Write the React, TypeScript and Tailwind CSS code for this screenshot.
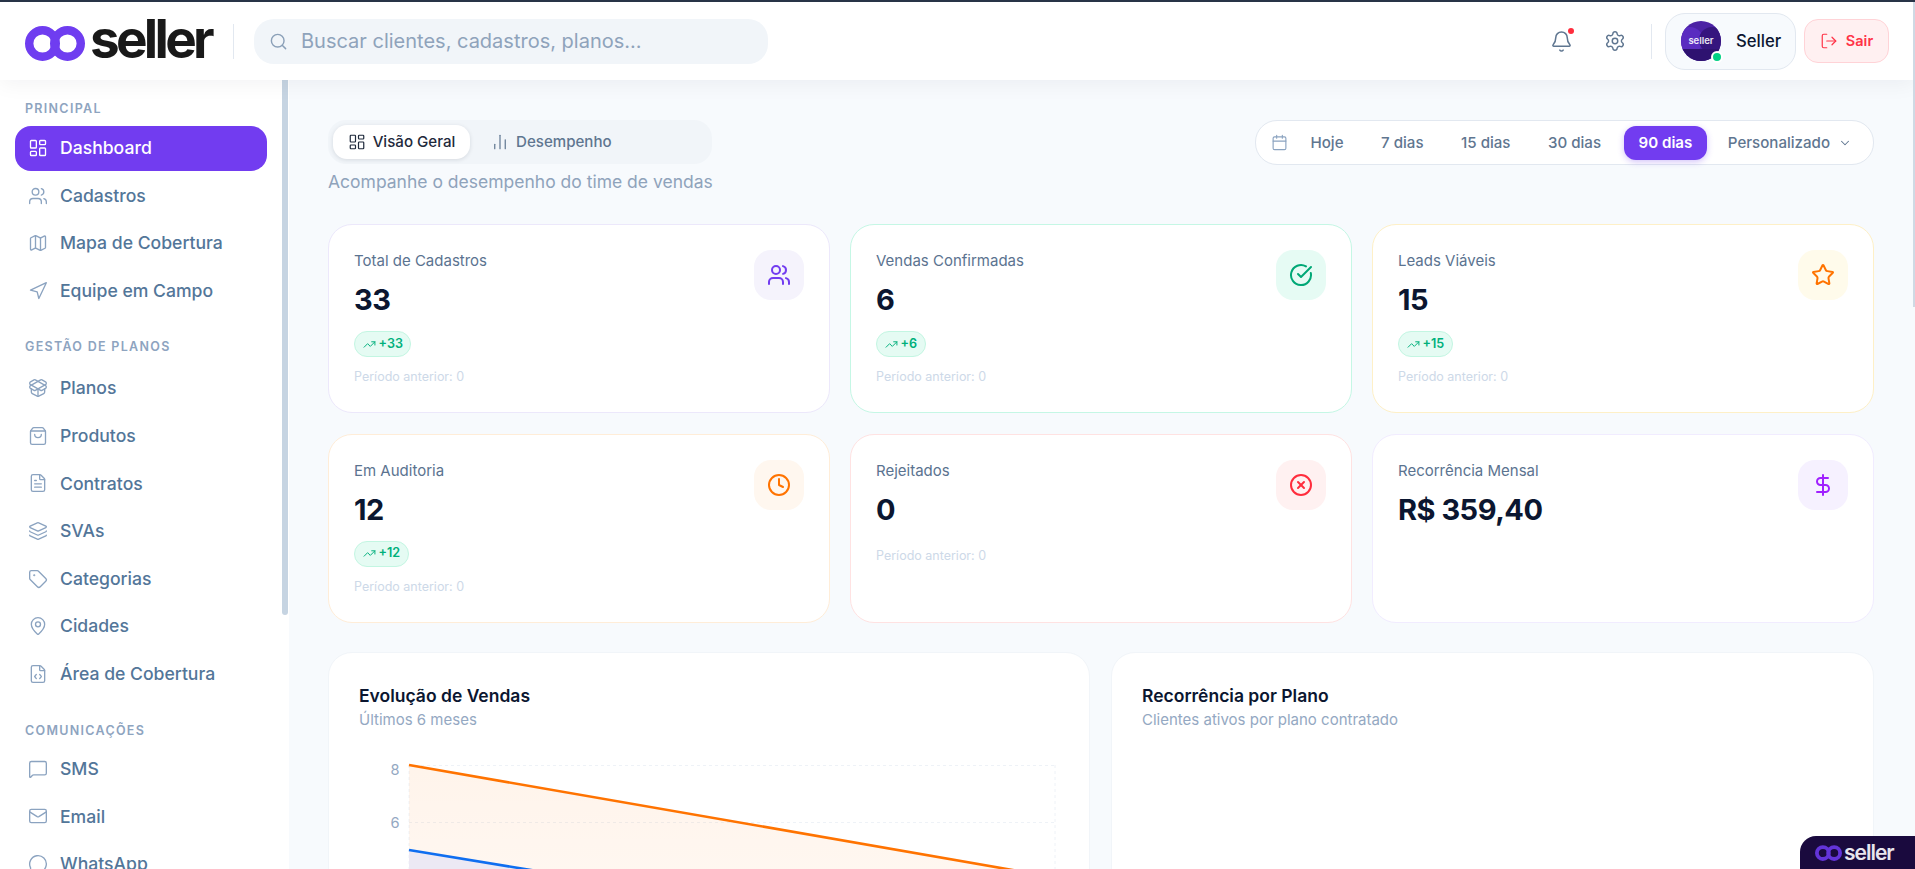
import React from "react";
import {
  Bell, Settings, Search, LayoutDashboard, Users, Map, Navigation, PackageOpen, ShoppingBag,
  FileText, Layers, Tag, MapPin, FileCode, MessageSquare, Mail, MessageCircle, ChartNoAxesColumn,
  Calendar, ChevronDown, LogOut, TrendingUp, CircleCheckBig, CircleX, Clock, Star, DollarSign,
} from "lucide-react";

function Rings({ w, h, stroke = "#6f3df0" }: { w: number; h: number; stroke?: string }) {
  return (
    <svg width={w} height={h} viewBox="0 0 60 35" fill="none" className="shrink-0">
      <circle cx="17.5" cy="17.5" r="13.3" stroke={stroke} strokeWidth="8.4" />
      <circle cx="42.5" cy="17.5" r="13.3" stroke={stroke} strokeWidth="8.4" />
    </svg>
  );
}

function NavItem({ icon: Icon, label, active }: { icon: any; label: string; active?: boolean }) {
  return (
    <div
      className={
        active
          ? "flex h-[45px] items-center gap-[12px] rounded-[16px] bg-[#723cf0] px-[13px] text-white"
          : "flex h-[45px] items-center gap-[12px] rounded-[16px] px-[13px] text-[#537699]"
      }
    >
      <Icon size={20} strokeWidth={1.6} className={active ? "text-white" : "text-[#8ba3c0]"} />
      <span className="text-[17.6px] font-medium leading-none">{label}</span>
    </div>
  );
}

function Section({ title, children, labelGap, top = "" }: { title: string; children: React.ReactNode; labelGap: string; top?: string }) {
  return (
    <div className={`flex flex-col ${top}`}>
      <div className={`pl-[10px] text-[12.5px] font-semibold uppercase leading-[14px] tracking-[1.3px] text-[#8ea4bf] ${labelGap}`}>{title}</div>
      <div className="flex flex-col gap-[2.6px]">{children}</div>
    </div>
  );
}

function StatCard({
  label, value, icon: Icon, border, iconBg, iconColor, delta, prev = true,
}: {
  label: string; value: string; icon: any; border: string; iconBg: string; iconColor: string; delta?: string; prev?: boolean;
}) {
  return (
    <div className={`relative h-[189px] rounded-[24px] border bg-white px-[25px] pt-[26px] ${border}`}>
      <div className="text-[15px] font-normal leading-[20px] text-[#5b7390]">{label}</div>
      <div className="mt-[9px] text-[29px] font-bold leading-[40px] tracking-[-0.5px] text-[#0b1630]">{value}</div>
      {delta && (
        <div className="mt-[11px] inline-flex h-[26px] items-center gap-[3px] rounded-full border border-[#c3f6e2] bg-[#e5fbf3] px-[7.5px] text-[12.6px] font-semibold leading-none text-[#00b07b]">
          <TrendingUp size={13} strokeWidth={1.8} />
          <span>{delta}</span>
        </div>
      )}
      {prev && <div className={`${delta ? "mt-[11px]" : "mt-[17.5px]"} text-[12.5px] leading-[18px] text-[#cdd9e8]`}>Período anterior: 0</div>}
      <div className={`absolute right-[25px] top-[25px] flex h-[50px] w-[50px] items-center justify-center rounded-[17px] ${iconBg}`}>
        <Icon size={24} strokeWidth={2} className={iconColor} />
      </div>
    </div>
  );
}

function RangeBtn({ label, active }: { label: string; active?: boolean }) {
  return (
    <div
      className={`flex h-[34px] items-center justify-center rounded-[12px] px-[15px] text-[15.1px] leading-none ${
        active ? "bg-[#723cf0] font-semibold text-white shadow-[0_2px_6px_rgba(114,60,240,0.3)]" : "font-medium text-[#5f7690]"
      }`}
    >
      {label}
    </div>
  );
}

export default function App() {
  return (
    <div className="relative flex h-screen flex-col overflow-hidden bg-[#f7fafd] font-['Inter',sans-serif]">
      <div className="h-[2px] shrink-0 bg-[#293548]" />
      <header className="relative z-10 flex h-[78px] shrink-0 items-center bg-white pl-[25px] pr-[26px] shadow-[0_4px_20px_rgba(15,23,42,0.05)]">
        <div className="flex w-[187px] items-center">
          <div className="mt-[5px]">
            <Rings w={60} h={35} />
          </div>
          <span className="ml-[5px] text-[53px] font-bold leading-none tracking-[-3.7px] text-[#191919] -translate-y-[2px]">seller</span>
        </div>
        <div className="ml-[21px] h-[35px] w-px bg-[#e2e8f0]" />
        <div className="ml-[20px] flex h-[45px] w-[514px] items-center gap-[13px] rounded-[20px] bg-[#f1f5f9] pl-[15px]">
          <Search size={19} strokeWidth={1.8} className="text-[#8ba0b8]" />
          <span className="text-[20px] leading-none text-[#8fa3bb]">Buscar clientes, cadastros, planos...</span>
        </div>
        <div className="ml-auto flex items-center">
          <div className="relative">
            <Bell size={23} strokeWidth={1.6} className="text-[#5f7690]" />
            <span className="absolute -right-[1px] -top-[2px] h-[6px] w-[6px] rounded-full bg-[#ff2d3d]" />
          </div>
          <Settings size={22} strokeWidth={1.6} className="ml-[31px] text-[#5f7690]" />
          <div className="ml-[25px] h-[35px] w-px bg-[#e2e8f0]" />
          <div className="ml-[13px] flex h-[57px] w-[131px] items-center rounded-[20px] border border-[#e2e8f0] bg-[#f7fafd] pl-[15px]">
            <div className="relative h-[40px] w-[40px] shrink-0 rounded-full bg-[#4b22a4]">
              <div className="absolute inset-0 overflow-hidden rounded-full">
                <div className="absolute -left-[4px] top-[6px] h-[26px] w-[26px] rounded-full bg-[#5a2cc0]" />
                <div className="absolute -right-[4px] top-[6px] h-[26px] w-[26px] rounded-full bg-[#35157e]" />
                <div className="absolute bottom-0 left-0 h-[12px] w-full bg-[#2e1270]" />
              </div>
              <div className="absolute inset-x-0 top-[13px] text-center text-[9.5px] font-semibold leading-[14px] text-white/90">seller</div>
              <span className="absolute bottom-[-2px] right-[-2px] h-[12px] w-[12px] rounded-full border-2 border-white bg-[#00d084]" />
            </div>
            <span className="ml-[15px] text-[16.7px] font-medium leading-none text-[#0b1630]">Seller</span>
          </div>
          <div className="ml-[8px] flex h-[44px] w-[85px] items-center justify-center gap-[8px] rounded-[14px] border border-[#ffd3d7] bg-[#fff0f1] text-[14.5px] font-semibold leading-none text-[#ff3347]">
            <LogOut size={18} strokeWidth={1.6} />
            <span>Sair</span>
          </div>
        </div>
      </header>

      <div className="flex min-h-0 flex-1">
        <aside className="relative flex w-[289px] shrink-0 flex-col gap-[27px] overflow-hidden bg-white pl-[15px] pr-[22px] pt-[22px]">
          <Section title="Principal" labelGap="mb-[9.5px]">
            <NavItem icon={LayoutDashboard} label="Dashboard" active />
            <NavItem icon={Users} label="Cadastros" />
            <NavItem icon={Map} label="Mapa de Cobertura" />
            <NavItem icon={Navigation} label="Equipe em Campo" />
          </Section>
          <Section title="Gestão de Planos" labelGap="mb-[11.5px]">
            <NavItem icon={PackageOpen} label="Planos" />
            <NavItem icon={ShoppingBag} label="Produtos" />
            <NavItem icon={FileText} label="Contratos" />
            <NavItem icon={Layers} label="SVAs" />
            <NavItem icon={Tag} label="Categorias" />
            <NavItem icon={MapPin} label="Cidades" />
            <NavItem icon={FileCode} label="Área de Cobertura" />
          </Section>
          <Section title="Comunicações" labelGap="mb-[8px]" top="mt-[1px]">
            <NavItem icon={MessageSquare} label="SMS" />
            <NavItem icon={Mail} label="Email" />
            <NavItem icon={MessageCircle} label="WhatsApp" />
          </Section>
          <div className="absolute right-[1px] top-0 h-[535px] w-[6px] rounded-b-full bg-[#c6d4e2]" />
        </aside>

        <main className="relative min-w-0 flex-1 overflow-hidden pl-[39px] pr-[41px] pt-[40px]">
          <div className="flex items-start justify-between">
            <div className="flex w-[384px] flex-col">
              <div className="flex h-[44px] items-center gap-[5px] rounded-[18px] bg-[#f1f5f9] pl-[5px]">
                <div className="flex h-[34px] w-[137px] items-center justify-center gap-[7px] rounded-[14px] bg-white text-[15.1px] font-medium leading-none text-[#1e293b] shadow-[0_1px_4px_rgba(15,23,42,0.12)]">
                  <LayoutDashboard size={18} strokeWidth={1.6} />
                  <span>Visão Geral</span>
                </div>
                <div className="flex h-[34px] items-center gap-[7px] px-[16px] text-[15.1px] font-medium leading-none text-[#5f7690]">
                  <ChartNoAxesColumn size={18} strokeWidth={1.6} />
                  <span>Desempenho</span>
                </div>
              </div>
              <div className="mt-[6px] whitespace-nowrap text-[17.5px] leading-[24px] text-[#8fa3bb]">Acompanhe o desempenho do time de vendas</div>
            </div>
            <div className="flex h-[45px] w-[619px] items-center gap-[7.5px] rounded-[22px] border border-[#e2e8f0] bg-white pl-[15px]">
              <Calendar size={17} strokeWidth={1.6} className="text-[#8ba3c0]" />
              <RangeBtn label="Hoje" />
              <RangeBtn label="7 dias" />
              <RangeBtn label="15 dias" />
              <RangeBtn label="30 dias" />
              <RangeBtn label="90 dias" active />
              <div className="ml-[13px] flex items-center gap-[8px] text-[15.1px] font-medium leading-none text-[#5f7690]">
                <span>Personalizado</span>
                <ChevronDown size={14} strokeWidth={1.8} />
              </div>
            </div>
          </div>

          <div className="mt-[30px] grid grid-cols-3 gap-x-[20px] gap-y-[20.5px]">
            <StatCard label="Total de Cadastros" value="33" icon={Users} border="border-[#ece8fb]" iconBg="bg-[#f5f3fc]" iconColor="text-[#723cf0]" delta="+33" />
            <StatCard label="Vendas Confirmadas" value="6" icon={CircleCheckBig} border="border-[#c5f7e5]" iconBg="bg-[#e6fbf4]" iconColor="text-[#00a876]" delta="+6" />
            <StatCard label="Leads Viáveis" value="15" icon={Star} border="border-[#fef0c7]" iconBg="bg-[#fffbeb]" iconColor="text-[#ff7300]" delta="+15" />
            <StatCard label="Em Auditoria" value="12" icon={Clock} border="border-[#ffedd8]" iconBg="bg-[#fff7ef]" iconColor="text-[#ff7300]" delta="+12" />
            <StatCard label="Rejeitados" value="0" icon={CircleX} border="border-[#ffe2e2]" iconBg="bg-[#fff1f1]" iconColor="text-[#ff2d3d]" />
            <StatCard label="Recorrência Mensal" value="R$ 359,40" icon={DollarSign} border="border-[#f1ecff]" iconBg="bg-[#f6f1ff]" iconColor="text-[#a020ff]" prev={false} />
          </div>

          <div className="mt-[29.5px] grid grid-cols-[762px_1fr] gap-[21px]">
            <div className="h-[500px] rounded-[24px] border border-[#f1f5f9] bg-white pl-[30px] pr-[30px] pt-[31px]">
              <div className="text-[17.5px] font-semibold leading-[24px] text-[#0b1630]">Evolução de Vendas</div>
              <div className="mt-[2px] text-[15px] leading-[20px] text-[#94a8c2]">Últimos 6 meses</div>
              <svg width="698" height="300" viewBox="0 0 698 300" className="mt-[26px] block" fill="none">
                <defs>
                  <linearGradient id="o" x1="0" y1="0" x2="0" y2="1">
                    <stop offset="0" stopColor="#ff7300" stopOpacity="0.08" />
                    <stop offset="1" stopColor="#ff7300" stopOpacity="0.02" />
                  </linearGradient>
                </defs>
                <g stroke="#eef2f7" strokeDasharray="3 3">
                  <path d="M50 9.5H696M50 66.5H696M50 123.5H696M50 9V300M696 9V300" />
                </g>
                <text x="36" y="18.5" fontSize="14.6" fill="#94a8c2" fontFamily="Inter" textAnchor="middle">8</text>
                <text x="36" y="71.5" fontSize="14.6" fill="#94a8c2" fontFamily="Inter" textAnchor="middle">6</text>
                <path d="M50 9L696 121.4V300H50Z" fill="url(#o)" />
                <path d="M50 94L696 200V300H50Z" fill="#ece9f4" />
                <path d="M50 9L696 121.4" stroke="#ff7300" strokeWidth="2.6" />
                <path d="M50 94L696 200" stroke="#0f6ef0" strokeWidth="2.6" />
              </svg>
            </div>
            <div className="h-[500px] rounded-[24px] border border-[#f1f5f9] bg-white pl-[30px] pt-[31px]">
              <div className="text-[17.5px] font-semibold leading-[24px] text-[#0b1630]">Recorrência por Plano</div>
              <div className="mt-[2px] text-[15px] leading-[20px] text-[#94a8c2]">Clientes ativos por plano contratado</div>
            </div>
          </div>
        </main>
      </div>

      <div className="absolute right-0 top-[2px] z-20 h-[305px] w-[2px] bg-[#cfd9e4]" />
      <div className="absolute bottom-0 right-0 z-20 flex h-[33px] w-[115px] items-center gap-[2px] rounded-tl-[16px] bg-[#1a0a3e] pl-[15px]">
        <Rings w={27} h={16} stroke="#6334d8" />
        <span className="text-[21px] font-semibold leading-none tracking-[-1px] text-[#e8e6ee]">seller</span>
      </div>
    </div>
  );
}
